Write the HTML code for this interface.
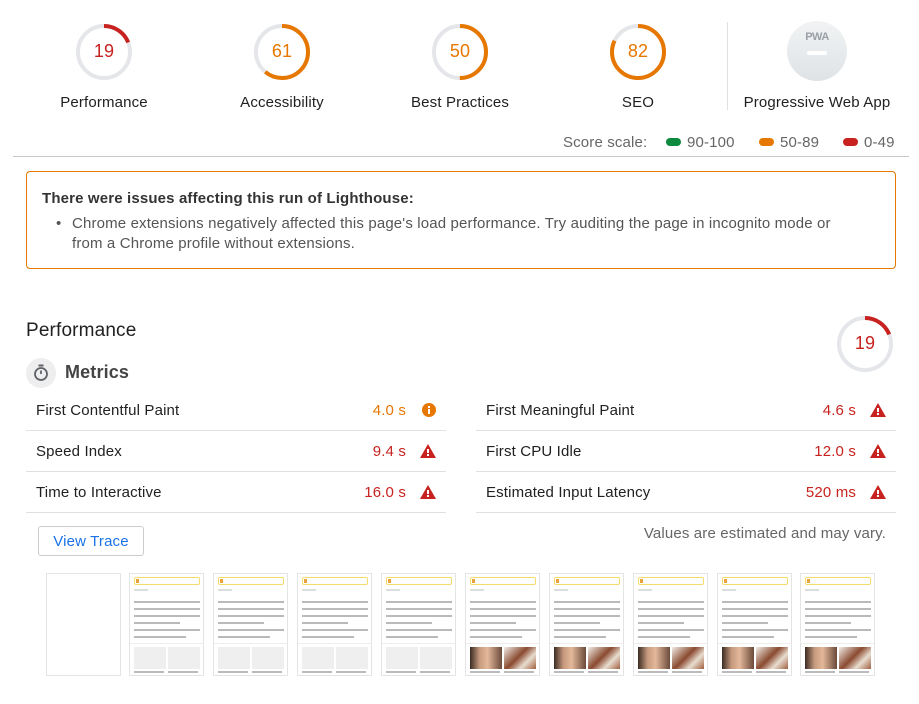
<!DOCTYPE html>
<html><head><meta charset="utf-8">
<style>
*{margin:0;padding:0;box-sizing:border-box}
body{width:919px;height:704px;background:#fff;font-family:"Liberation Sans","Noto Sans CJK KR",sans-serif;color:#212121;position:relative;overflow:hidden;letter-spacing:0.15px}
.a{position:absolute}
.g{position:absolute;width:60px;height:60px}
.gl{position:absolute;font-size:15px;color:#212121;text-align:center;width:180px}
.gn{position:absolute;width:60px;text-align:center;font-size:18px;top:19px;left:0}
.row{position:absolute;height:41px;border-bottom:1px solid #e0e0e0;font-size:15px}
.row .t{position:absolute;left:10px;top:12px;color:#212121}
.row .v{position:absolute;right:40px;top:12px}
.row svg{position:absolute;right:10px;top:13px}
.red{color:#c7221f}.or{color:#e67700}
.th{position:absolute;top:573px;width:75px;height:103px;border:1px solid #e4e4e4;background:#fff}
.th .bar{position:absolute;left:4px;top:3px;width:66px;height:8px;border:1px solid #f5dc6a;border-radius:2px}
.th .bar:before{content:"";position:absolute;left:1px;top:1px;width:3px;height:4px;background:#e8a33c}
.th .ln{position:absolute;left:4px;height:2px;background:#a9a9a9;opacity:.8}
.th .im{position:absolute;top:73px;width:32px;height:22px;background:#efefef}
.th .ct{position:absolute;height:2px;width:30px;background:#bbb;top:97px}
</style></head><body>

<div class="g" style="left:74px;top:22px"><svg width="60" height="60"><circle cx="30" cy="30" r="26" fill="none" stroke="#e4e6ea" stroke-width="4"/><circle cx="30" cy="30" r="26" fill="none" stroke="#c7221f" stroke-width="4" stroke-dasharray="31 200" transform="rotate(-90 30 30)"/></svg><div class="gn red">19</div></div>
<div class="gl" style="left:14px;top:94px">Performance</div>

<div class="g" style="left:252px;top:22px"><svg width="60" height="60"><circle cx="30" cy="30" r="26" fill="none" stroke="#e4e6ea" stroke-width="4"/><circle cx="30" cy="30" r="26" fill="none" stroke="#e67700" stroke-width="4" stroke-dasharray="99.7 200" transform="rotate(-90 30 30)"/></svg><div class="gn or">61</div></div>
<div class="gl" style="left:192px;top:94px">Accessibility</div>

<div class="g" style="left:430px;top:22px"><svg width="60" height="60"><circle cx="30" cy="30" r="26" fill="none" stroke="#e4e6ea" stroke-width="4"/><circle cx="30" cy="30" r="26" fill="none" stroke="#e67700" stroke-width="4" stroke-dasharray="81.7 200" transform="rotate(-90 30 30)"/></svg><div class="gn or">50</div></div>
<div class="gl" style="left:370px;top:94px">Best Practices</div>

<div class="g" style="left:608px;top:22px"><svg width="60" height="60"><circle cx="30" cy="30" r="26" fill="none" stroke="#e4e6ea" stroke-width="4"/><circle cx="30" cy="30" r="26" fill="none" stroke="#e67700" stroke-width="4" stroke-dasharray="134 200" transform="rotate(-90 30 30)"/></svg><div class="gn or">82</div></div>
<div class="gl" style="left:548px;top:94px">SEO</div>

<div class="a" style="left:727px;top:22px;width:1px;height:88px;background:#e0e0e0"></div>
<div class="a" style="left:787px;top:21px;width:60px;height:60px;border-radius:50%;background:linear-gradient(#f1f3f4,#dfe3e6)"></div>
<div class="a" style="left:787px;top:31px;width:60px;text-align:center;font-size:11px;font-weight:bold;color:#9aa0a6;letter-spacing:-0.5px">PWA</div>
<div class="a" style="left:807px;top:51px;width:20px;height:4px;border-radius:2px;background:#fff"></div>
<div class="gl" style="left:727px;top:94px">Progressive Web App</div>

<div class="a" style="left:563px;top:134px;font-size:15px;color:#666">Score scale:</div>
<div class="a" style="left:666px;top:138px;width:15px;height:8px;border-radius:4px;background:#0d8a3e"></div>
<div class="a" style="left:687px;top:134px;font-size:15px;color:#666">90-100</div>
<div class="a" style="left:759px;top:138px;width:15px;height:8px;border-radius:4px;background:#e67700"></div>
<div class="a" style="left:780px;top:134px;font-size:15px;color:#666">50-89</div>
<div class="a" style="left:843px;top:138px;width:15px;height:8px;border-radius:4px;background:#c7221f"></div>
<div class="a" style="left:864px;top:134px;font-size:15px;color:#666">0-49</div>
<div class="a" style="left:13px;top:156px;width:896px;height:1px;background:#c8c8c8"></div>

<div class="a" style="left:26px;top:171px;width:870px;height:98px;border:1px solid #e67700;border-radius:4px"></div>
<div class="a" style="left:42px;top:190px;font-size:15px;font-weight:bold;color:#333">There were issues affecting this run of Lighthouse:</div>
<div class="a" style="left:56px;top:214px;font-size:15px;color:#555;line-height:20px;width:800px">
<span style="position:absolute;left:0">•</span><div style="margin-left:16px">Chrome extensions negatively affected this page's load performance. Try auditing the page in incognito mode or<br>from a Chrome profile without extensions.</div></div>

<div class="a" style="left:26px;top:320px;font-size:19px;color:#212121">Performance</div>
<div class="g" style="left:835px;top:314px"><svg width="60" height="60"><circle cx="30" cy="30" r="26" fill="none" stroke="#e4e6ea" stroke-width="4"/><circle cx="30" cy="30" r="26" fill="none" stroke="#c7221f" stroke-width="4" stroke-dasharray="31 200" transform="rotate(-90 30 30)"/></svg><div class="gn red">19</div></div>

<div class="a" style="left:26px;top:358px;width:30px;height:30px;border-radius:50%;background:#eeeeee"></div>
<svg class="a" style="left:31px;top:363px" width="20" height="20" viewBox="0 0 20 20"><rect x="7.5" y="1.5" width="5" height="2" fill="#5f6368"/><circle cx="10" cy="11" r="6" fill="none" stroke="#5f6368" stroke-width="1.8"/><line x1="10" y1="11" x2="10" y2="7.5" stroke="#5f6368" stroke-width="1.8"/></svg>
<div class="a" style="left:65px;top:362px;font-size:18px;font-weight:bold;color:#444">Metrics</div>

<div class="row" style="left:26px;top:390px;width:420px"><span class="t">First Contentful Paint</span><span class="v or">4.0 s</span><svg width="14" height="14"><circle cx="7" cy="7" r="7" fill="#e67700"/><rect x="6" y="6" width="2" height="5" fill="#fff"/><rect x="6" y="3" width="2" height="2" fill="#fff"/></svg></div>
<div class="row" style="left:26px;top:431px;width:420px"><span class="t">Speed Index</span><span class="v red">9.4 s</span><svg width="16" height="14"><path d="M8 0L16 14H0Z" fill="#c7221f"/><rect x="7" y="5" width="2" height="4" fill="#fff"/><rect x="7" y="10" width="2" height="2" fill="#fff"/></svg></div>
<div class="row" style="left:26px;top:472px;width:420px"><span class="t">Time to Interactive</span><span class="v red">16.0 s</span><svg width="16" height="14"><path d="M8 0L16 14H0Z" fill="#c7221f"/><rect x="7" y="5" width="2" height="4" fill="#fff"/><rect x="7" y="10" width="2" height="2" fill="#fff"/></svg></div>
<div class="row" style="left:476px;top:390px;width:420px"><span class="t">First Meaningful Paint</span><span class="v red">4.6 s</span><svg width="16" height="14"><path d="M8 0L16 14H0Z" fill="#c7221f"/><rect x="7" y="5" width="2" height="4" fill="#fff"/><rect x="7" y="10" width="2" height="2" fill="#fff"/></svg></div>
<div class="row" style="left:476px;top:431px;width:420px"><span class="t">First CPU Idle</span><span class="v red">12.0 s</span><svg width="16" height="14"><path d="M8 0L16 14H0Z" fill="#c7221f"/><rect x="7" y="5" width="2" height="4" fill="#fff"/><rect x="7" y="10" width="2" height="2" fill="#fff"/></svg></div>
<div class="row" style="left:476px;top:472px;width:420px"><span class="t">Estimated Input Latency</span><span class="v red">520 ms</span><svg width="16" height="14"><path d="M8 0L16 14H0Z" fill="#c7221f"/><rect x="7" y="5" width="2" height="4" fill="#fff"/><rect x="7" y="10" width="2" height="2" fill="#fff"/></svg></div>

<div class="a" style="left:38px;top:526px;width:106px;height:30px;border:1px solid #ccc;border-radius:3px;color:#1a73e8;font-size:15px;text-align:center;line-height:29px">View Trace</div>
<div class="a" style="left:643px;top:525px;width:243px;text-align:right;font-size:15px;color:#666">Values are estimated and may vary.</div>

<div class="th" style="left:46px"></div>
<div id="thumbs"></div>
<script>
var xs=[129,213,297,381,465,549,633,717,800];
var h='';
xs.forEach(function(x,i){
 var img=i>=4;
 h+='<div class="th" style="left:'+x+'px"><div class="bar"></div>'+
 '<div class="ln" style="top:15px;width:14px;opacity:.4"></div>'+
 [27,34,41,48,55,62].map(function(t,j){return '<div class="ln" style="top:'+t+'px;width:'+(j==3?46:j==5?52:66)+'px"></div>'}).join('')+
 '<div class="a" style="left:0;top:69px;width:73px;height:1px;background:#eee"></div>'+
 '<div class="im" style="left:4px;'+(img?'background:linear-gradient(90deg,#3a2a22,#c79a7e 30%,#e3b89a 55%,#6b4a3a);':'')+'"></div>'+
 '<div class="im" style="left:38px;'+(img?'background:linear-gradient(135deg,#f2ede6,#8a4a30 45%,#e8ddd0 70%,#a06040);':'')+'"></div>'+
 '<div class="ct" style="left:4px"></div><div class="ct" style="left:38px"></div></div>';
});
document.getElementById('thumbs').innerHTML=h;
</script>
</body></html>
